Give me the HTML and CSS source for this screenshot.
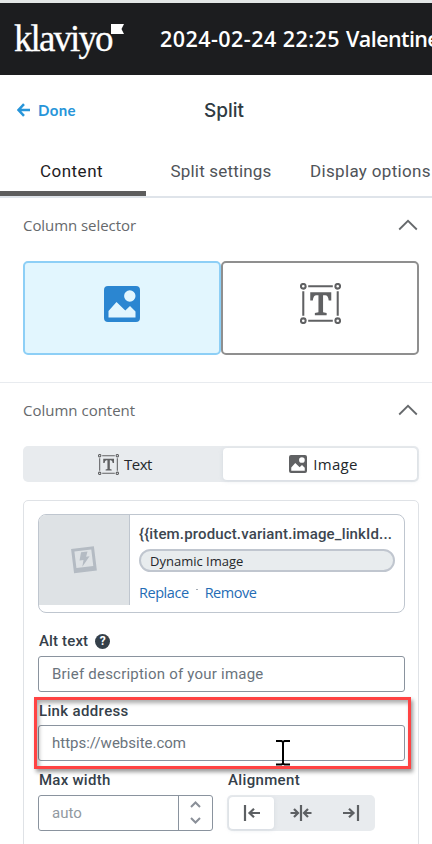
FILE: index.html
```
<!DOCTYPE html>
<html lang="en">
<head>
<meta charset="utf-8">
<title>Split</title>
<link rel="stylesheet" href="styles.css">
</head>
<body>
<svg width="0" height="0" class="defs">
  <symbol id="picture" viewBox="0 0 36 36">
    <path fill-rule="evenodd" d="M4 0H32Q36 0 36 4V32Q36 36 32 36H4Q0 36 0 32V4Q0 0 4 0ZM31.5 10A5.7 5.7 0 1 0 20.100 10A5.700 5.700 0 1 0 31.500 10ZM4.500 31.500H31.500V25.500L26 20L21.300 24.500L12.500 16L4.500 25Z"/>
  </symbol>
  <symbol id="textbox" viewBox="0 0 40 40">
    <g fill="none" stroke="currentColor" stroke-width="2">
      <circle cx="3.200" cy="3.200" r="2.300"/><circle cx="36.800" cy="3.200" r="2.300"/><circle cx="3.200" cy="36.800" r="2.300"/><circle cx="36.800" cy="36.800" r="2.300"/>
      <path d="M8 3.200H32M8 36.800H32M3.200 8V32M36.800 8V32"/>
    </g>
    <path d="M10 9H30.500V17H28Q27.500 12 24.500 12H22.500V28.500L26 29.300V31.500H14.500V29.300L18 28.500V12H16Q13 12 12.500 17H10Z"/>
  </symbol>
  <symbol id="chevron" viewBox="0 0 20 12"><path d="M1.200 10.500L10 1.800L18.800 10.500" fill="none" stroke="currentColor" stroke-width="1.800"/></symbol>
  <symbol id="arrow" viewBox="0 0 14 14"><path d="M13 7H2M7 1.200L1.500 7L7 12.800" fill="none" stroke="currentColor" stroke-width="2.500"/></symbol>
</svg>

<header class="topbar">
  <div class="logo"><span>klaviyo</span><svg width="13" height="10" viewBox="0 0 13 10"><path d="M0 0H13L10.500 5L13 10H0Z" fill="#fff"/></svg></div>
  <h1 class="campaign">2024-02-24 22:25 <span>Valentine</span></h1>
</header>

<div class="titlebar">
  <a class="done"><svg width="14" height="14"><use href="#arrow"/></svg><span>Done</span></a>
  <h2 class="title">Split</h2>
</div>

<nav class="tabs">
  <div class="tab active"><span class="t-content">Content</span></div>
  <div class="tab"><span class="t-settings">Split settings</span></div>
  <div class="tab"><span class="t-display">Display options</span></div>
</nav>

<section class="selector">
  <div class="section-head"><span class="h-selector">Column selector</span><svg width="20" height="12"><use href="#chevron"/></svg></div>
  <div class="columns">
    <div class="column selected"><svg width="36" height="36"><use href="#picture"/></svg></div>
    <div class="column"><svg width="41" height="41"><use href="#textbox"/></svg></div>
  </div>
</section>

<section class="content">
  <div class="section-head"><span class="h-content">Column content</span><svg width="20" height="12"><use href="#chevron"/></svg></div>
  <div class="segmented">
    <div class="segment"><svg width="21" height="21"><use href="#textbox"/></svg><span class="s-text">Text</span></div>
    <div class="segment on"><svg width="18" height="18"><use href="#picture"/></svg><span class="s-image">Image</span></div>
  </div>

  <div class="panel">
    <div class="asset">
      <div class="thumb">
        <svg width="26" height="28" viewBox="0 0 26 28"><g transform="rotate(-7 13 14)" fill="#b4bbc3"><path fill-rule="evenodd" d="M1.500 1.500H24.500V26H1.500ZM4.500 4.500V21H21.500V4.500Z"/><path d="M11 6H17.500L15.500 11H19L10.500 20.500L12.500 14H8.500Z"/></g></svg>
      </div>
      <div class="asset-info">
        <div class="asset-name"><span>{{item.product.variant.image_linkId...</span></div>
        <div class="pill"><span>Dynamic Image</span></div>
        <div class="links"><a class="replace">Replace</a><i></i><a class="remove">Remove</a></div>
      </div>
    </div>

    <div class="label alt"><span class="l-alt">Alt text</span><b class="help">?</b></div>
    <div class="input"><span class="p-alt">Brief description of your image</span></div>

    <div class="link-field">
      <div class="label"><span class="l-link">Link address</span></div>
      <div class="input"><span class="p-link">https://website.com</span></div>
      <div class="highlight"></div>
      <svg class="cursor" width="14" height="26" viewBox="0 0 14 26"><path d="M0 1H5.500L7 2L8.500 1H14M0 24.500H5.500L7 23.500L8.500 24.500H14M7 1.500V24" fill="none" stroke="#000" stroke-width="2"/></svg>
    </div>

    <div class="row">
      <div class="width-field">
        <div class="label"><span class="l-width">Max width</span></div>
        <div class="input number">
          <span class="p-auto">auto</span>
          <div class="stepper">
            <svg width="11" height="7" viewBox="0 0 11 7"><path d="M1 6L5.500 1.500L10 6"/></svg>
            <svg width="11" height="7" viewBox="0 0 11 7"><path d="M1 1L5.500 5.500L10 1"/></svg>
          </div>
        </div>
      </div>
      <div class="align-field">
        <div class="label"><span class="l-align">Alignment</span></div>
        <div class="align">
          <div class="align-option on"><svg width="18" height="16" viewBox="0 0 18 16"><path d="M2 0V16M17 8H7M11 3.800L6.500 8L11 12.200"/></svg></div>
          <div class="align-option"><svg width="22" height="16" viewBox="0 0 22 16"><path d="M11 0V16M0.500 8H7M4 4L8 8L4 12M21.500 8H15M18 4L14 8L18 12"/></svg></div>
          <div class="align-option"><svg width="18" height="16" viewBox="0 0 18 16"><path d="M16 0V16M1 8H11M7 3.800L11.500 8L7 12.200"/></svg></div>
        </div>
      </div>
    </div>
  </div>
</section>
</body>
</html>
```
FILE: styles.css
```
* { box-sizing: border-box; }
body {
  margin: 0;
  width: 432px;
  height: 844px;
  overflow: hidden;
  background: #fff;
  color: #35404a;
  font-family: "Open Sans", "Noto Sans", sans-serif;
  border-top: 3px solid #e3e6e6;
}
.defs { display: block; position: absolute; }
svg { display: block; flex: none; fill: currentColor; }
h1, h2 { margin: 0; }
span, a { white-space: nowrap; }

.topbar { height: 72px; background: #1c1d1f; color: #fff; display: flex; align-items: center; overflow: hidden; }
.logo { width: 160px; flex: none; padding-left: 14px; display: flex; align-items: flex-start; }
.logo span { font: 37px/44px "Liberation Serif", serif; letter-spacing: -1.900px; width: 97px; -webkit-text-stroke: 0.300px #fff; }
.logo svg { margin-top: 7px; }
.campaign { font: 600 21.500px/30px "Open Sans", sans-serif; letter-spacing: 0.450px; white-space: nowrap; }
.campaign span { letter-spacing: -0.600px; }

.titlebar { height: 72px; display: grid; grid-template-columns: 187px 72px 1fr; align-items: center; padding-left: 17px; }
.done { display: flex; align-items: center; gap: 7px; color: #2795d9; font: 700 15px/20px Lato, sans-serif; letter-spacing: 0.400px; padding-bottom: 2px; }
.title { font: 500 19px/24px Inter, sans-serif; color: #2f3a42; }

.tabs { height: 51px; display: grid; grid-template-columns: 146px 146px 1fr; border-bottom: 2px solid #dfe4ea; }
.tab { display: flex; justify-content: center; font: 17px/22px Roboto, sans-serif; color: #4f5358; padding-top: 13px; }
.tab:last-child { justify-content: flex-start; padding-left: 18px; }
.tab.active { border-bottom: 5px solid #5d5d5d; color: #1d2023; }
.t-content { letter-spacing: 0.500px; margin-left: -3px; }
.t-settings { letter-spacing: 0.180px; margin-left: 4px; }
.t-display { letter-spacing: 0.330px; }

.section-head { display: flex; justify-content: space-between; align-items: center; height: 20px; font-size: 15px; line-height: 20px; color: #66696c; padding-right: 1px; }
.selector { height: 185px; padding: 17px 13px 0 23px; border-bottom: 1px solid #e8ebef; }
.columns { display: grid; grid-template-columns: 198px 198px; margin-top: 26px; }
.column { height: 94px; border: 2px solid #8f8f8f; border-radius: 5px; display: flex; justify-content: center; padding-top: 23px; color: #606163; }
.column:not(.selected) { padding-top: 20px; }
.selected { background: #e2f6fe; border-color: #8dcff6; color: #2b86d1; }
.h-selector { letter-spacing: -0.060px; }

.content { padding: 17px 13px 0 23px; }
.segmented { width: 396px; height: 36px; margin-top: 26px; background: #e8ebee; border-radius: 5px; padding: 2px; display: grid; grid-template-columns: 198px 194px; color: #606163; }
.segment { display: flex; justify-content: center; align-items: center; gap: 5px; padding-left: 2px; font-size: 15px; }
.segment span { color: #24272b; }
.s-text { letter-spacing: -0.500px; }
.s-image { letter-spacing: 0.300px; }
.segment.on { background: #fff; border-radius: 4px; box-shadow: 0 1px 4px #b7c1cc66; padding-left: 7px; gap: 6px; }

.panel { width: 396px; height: 350px; margin-top: 18px; border: 1px solid #dfe2e6; border-radius: 5px; padding: 13px 13px 0 14px; }
.asset { width: 367px; height: 99px; border: 1px solid #bfc6cf; border-radius: 8px; display: flex; overflow: hidden; }
.thumb { width: 91px; height: 90px; background: #dee2e5; border-right: 1px solid #bfc6cf; display: flex; align-items: center; justify-content: center; flex: none; }
.asset-info { padding: 9px 0 0 9px; width: 265px; }
.asset-name { height: 20px; font: 500 15px/20px Roboto, sans-serif; letter-spacing: 0.150px; color: #3c4650; }
.pill { width: 256px; height: 23px; margin-top: 5px; border: 2px solid #c0c6cf; background: #e8ecee; border-radius: 12px; padding-left: 9px; font-size: 13px; line-height: 20px; color: #24272b; }
.links { display: flex; margin-top: 11px; font-size: 14.500px; line-height: 20px; letter-spacing: -0.450px; color: #246cb5; }
.links i { width: 2px; height: 1px; background: #a5acb5; margin: 6px 7px 0; }

.label { height: 20px; font: 500 15px/20px Roboto, sans-serif; color: #35404a; padding-left: 1px; display: flex; align-items: center; }
.l-alt { letter-spacing: 0.150px; }
.l-link { letter-spacing: 0.350px; }
.l-width { letter-spacing: 0.250px; }
.l-align { letter-spacing: 0.350px; }
.alt { margin-top: 18px; gap: 7px; }
.help { width: 15px; height: 15px; border-radius: 50%; background: #35404a; color: #fff; font: 700 12px/15px Roboto, sans-serif; text-align: center; }
.input { width: 367px; height: 36px; border: 1px solid #8a939e; border-radius: 3px; padding-left: 13px; font: 15px/34px Roboto, sans-serif; color: #6a737c; }
.p-alt { letter-spacing: 0.220px; }
.alt + .input { margin-top: 5px; }
.link-field { position: relative; margin-top: 9px; }
.link-field .input { margin-top: 4px; }
.highlight { position: absolute; left: -4px; top: -4px; width: 377px; height: 72px; border: 3px solid #ff4343; box-shadow: 2px 3px 4px #0006, inset 2px 3px 4px #0005; }
.cursor { position: absolute; left: 238px; top: 39px; }
.row { display: grid; grid-template-columns: 189px 1fr; margin-top: 9px; }
.row .label + div { margin-top: 5px; }
.number { width: 175px; display: flex; color: #9199a1; }
.stepper { width: 34px; margin-left: auto; border-left: 1px solid #8a939e; display: flex; flex-direction: column; align-items: center; justify-content: space-between; padding: 5px 0 6px; }
.stepper path { fill: none; stroke: #8a8f98; stroke-width: 2; }
.align { width: 148px; height: 36px; background: #e8ebee; border-radius: 5px; padding: 2px; display: grid; grid-template-columns: 45px 54px 45px; }
.align-option { display: flex; align-items: center; justify-content: center; }
.align-option.on { background: #fff; border-radius: 4px; box-shadow: 0 1px 4px #b7c1cc66; }
.align-option path { fill: none; stroke: #5d6063; stroke-width: 2.200; }
```
